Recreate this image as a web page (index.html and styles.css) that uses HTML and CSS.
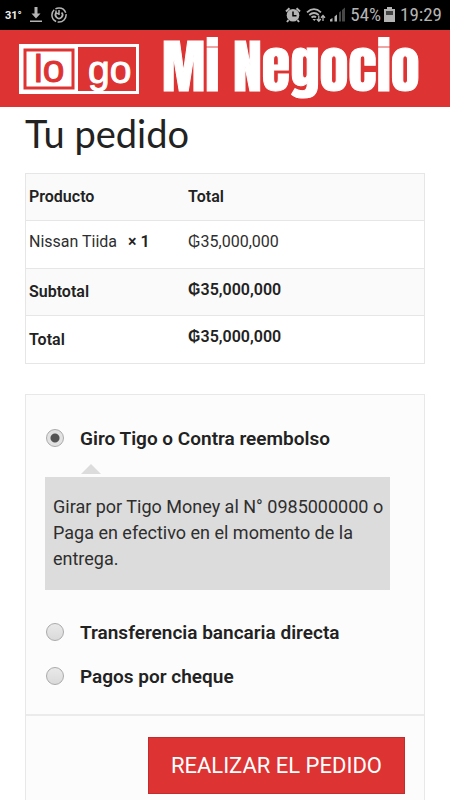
FILE: index.html
```html
<!DOCTYPE html>
<html lang="es">
<head>
<meta charset="utf-8">
<meta name="viewport" content="width=device-width, initial-scale=1">
<title>Mi Negocio</title>
<link rel="stylesheet" href="styles.css">
</head>
<body>
<div class="status">
  <span class="temp">31°</span>
  <svg class="icon" width="12" height="16" viewBox="0 0 12 16" fill="currentColor"><path d="M4.500 0h3v6.500h3L6 11.500 1.500 6.500h3zM0 13.500h12V15H0z"/></svg>
  <svg class="icon ring" width="16" height="16" viewBox="0 0 16 16" fill="none" stroke="currentColor"><circle cx="8" cy="8" r="7.100" stroke-width="1.500" stroke-dasharray="12.500 1.500 14 1.500"/><path d="M5.400 5.500A3.500 3.500 0 1 0 10.600 5.500" stroke-width="1.700"/><path d="M8 3v5M5 3.500v3h3" stroke-width="1.500"/></svg>
  <div class="status-right">
    <svg class="icon" width="16" height="16" viewBox="0 0 16 16"><circle cx="8" cy="8.300" r="6.300" fill="currentColor"/><path d="M1 4.500 4.500 1.200M15 4.500 11.500 1.200M3.500 13 2 15M12.500 13l1.500 2" stroke="currentColor" stroke-width="2"/><path d="M8 4.500v4.300h3.500" fill="none" stroke="#000" stroke-width="1.500"/></svg>
    <svg class="icon wifi" width="20" height="16" viewBox="0 0 20 16" fill="none" stroke="currentColor" stroke-width="1.800"><path d="M1 5.300Q8 -1 15 5.300M3.300 8Q8 4 12.700 8M5.500 10.500Q8 8.500 10 10.300"/><path d="M6.500 12h3.500L8.300 14z" fill="currentColor" stroke="none"/><path d="M12.800 8.500V14M10.800 12l2 2.200 2-2.200M17 14V8.500M15 10.700l2-2.200 2 2.200" stroke-width="1.300"/></svg>
    <svg class="icon" width="16" height="16" viewBox="0 0 16 16" fill="currentColor"><path d="M1 12.500 3.500 11v3.500H1zM5.500 9.500 8 7.500v7H5.500z"/><path d="M10 5.500 12 4v10.500h-2zM13 3l3-2.500v14h-3z" opacity=".4"/></svg>
    <span class="num">54%</span>
    <svg class="icon" width="11" height="16" viewBox="0 0 11 16"><path d="M3 0h5v2h3v13H0V2h3z" fill="currentColor"/><path d="M2 4h7v4H2z" fill="#444"/></svg>
    <span class="num">19:29</span>
  </div>
</div>
<header class="brand">
  <svg class="logo" width="120" height="50" viewBox="0 0 120 50" role="img" aria-label="logo">
    <path d="M0 0h120v50H0z" fill="#fff"/>
    <path d="M6 6h48v38H6z" fill="#fff" stroke="#d33" stroke-width="3"/>
    <path d="M59 3h58v44H59z" fill="#de3333"/>
    <text x="15" y="38" class="logo-text logo-red">lo</text>
    <text x="69" y="39" class="logo-text">go</text>
    <path d="M59 47h61v3H59z" fill="#fff"/>
  </svg>
  <span class="brand-name">Mi Negocio</span>
</header>
<main class="content">
  <h1>Tu pedido</h1>
  <table class="order">
    <thead><tr><th scope="col">Producto</th><th scope="col">Total</th></tr></thead>
    <tbody>
      <tr><td>Nissan Tiida&nbsp; <strong class="qty">× 1</strong></td><td>₲35,000,000</td></tr>
    </tbody>
    <tfoot>
      <tr class="shade"><th scope="row">Subtotal</th><td><strong>₲35,000,000</strong></td></tr>
      <tr><th scope="row">Total</th><td><strong>₲35,000,000</strong></td></tr>
    </tfoot>
  </table>
  <form class="payment">
    <div class="methods">
      <label class="method"><input type="radio" name="pay" checked>Giro Tigo o Contra reembolso</label>
      <p class="note">Girar por Tigo Money al N° 0985000000 o Paga en efectivo en el momento de la entrega.</p>
      <label class="method"><input type="radio" name="pay">Transferencia bancaria directa</label>
      <label class="method"><input type="radio" name="pay">Pagos por cheque</label>
    </div>
    <div class="actions"><button type="button">REALIZAR EL PEDIDO</button></div>
  </form>
</main>
</body>
</html>
```
FILE: styles.css
```css
* { box-sizing: border-box; }
body {
  margin: 0;
  background: #fff;
  color: #2e2e2e;
  font-family: Roboto, "Liberation Sans", sans-serif;
  font-size: 16px;
}
.status {
  display: flex;
  align-items: center;
  height: 30px;
  padding: 0 8px 0 5px;
  background: #000;
  color: #b4b4b4;
}
.temp { color: #eee; font-size: 11px; font-weight: 700; margin-right: 8px; }
.icon { display: block; flex: none; }
.ring { margin-left: 9px; }
.status-right { display: flex; align-items: center; gap: 3px; margin-left: auto; }
.wifi { margin-left: 2px; }
.num { font-family: "Roboto Condensed", "Liberation Sans Narrow", Roboto, sans-serif; font-size: 19px; line-height: 24px; }
.status-right .num { margin-left: 2px; }
.brand {
  display: flex;
  align-items: center;
  gap: 23px;
  height: 77px;
  padding: 0 19px;
  background: #de3333;
}
.logo { display: block; flex: none; }
.logo-text {
  fill: #fff;
  stroke: #fff;
  stroke-width: 1px;
  font-family: "Liberation Sans", Arial, sans-serif;
  font-size: 39px;
}
.logo-red { fill: #d33; stroke: #d33; }
.brand-name {
  padding-bottom: 4px;
  color: #fff;
  font-family: Impact, Anton, "Roboto Condensed", Roboto, sans-serif;
  font-size: 58px;
  font-weight: 400;
  line-height: 73px;
  white-space: nowrap;
  -webkit-text-stroke: 1px #fff;
}
.content { padding: 0 25px; }
h1 {
  margin: 0;
  color: #222;
  font-family: Lato, sans-serif;
  font-size: 38px;
  font-weight: 400;
  line-height: 52px;
}
.order {
  width: 100%;
  margin-top: 14px;
  table-layout: fixed;
  border-collapse: collapse;
  border: 1px solid #e6e6e6;
}
.order tr { height: 47px; border-top: 1px solid #e6e6e6; }
.order tbody tr { height: 48px; }
.order tfoot tr:last-child { height: 48px; }
.order th, .order td { padding: 0 3px; text-align: left; line-height: 20px; }
.order th:first-child, .order td:first-child { width: 40%; }
.order th, .order strong { font-weight: 600; color: #222; }
.order .qty { margin-left: 3px; }
.order td { padding-bottom: 5px; }
.order thead, .shade { background: #fafafa; }
.payment {
  margin-top: 30px;
  background: #fcfcfc;
  border: 1px solid #e8e8e8;
  border-bottom: 0;
}
.methods { padding: 21px 19px 16px; }
.method {
  display: flex;
  align-items: center;
  gap: 16px;
  height: 44px;
  color: #222;
  font-size: 19px;
  font-weight: 600;
}
.method input {
  appearance: none;
  width: 18px;
  height: 18px;
  margin: 0 0 0 1px;
  border: 1px solid #aaa;
  border-radius: 50%;
  background: linear-gradient(#e9e9e9, #dadada);
}
.method input:checked { background: radial-gradient(circle, #555 4px, #e2e2e2 5px); }
.note {
  position: relative;
  margin: 17px 15px 20px 0;
  padding: 17px 0 18px 8px;
  background: #dcdcdc;
  font-size: 18px;
  line-height: 26px;
}
.note::before {
  content: "";
  position: absolute;
  left: 36px;
  top: -13px;
  border: 10px solid transparent;
  border-top: 0;
  border-bottom-color: #dcdcdc;
}
.actions {
  display: flex;
  justify-content: flex-end;
  padding: 21px 19px 6px;
  border-top: 2px solid #ebebeb;
}
.actions button {
  height: 57px;
  padding: 0 22px;
  border: 1px solid #c22c2c;
  background: #de3333;
  color: #fff;
  font-family: inherit;
  font-size: 22px;
}
```
